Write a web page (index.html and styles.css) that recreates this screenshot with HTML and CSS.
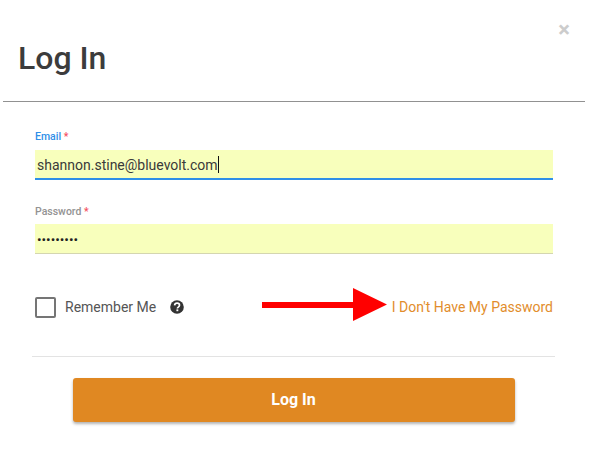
FILE: index.html
```html
<!DOCTYPE html>
<html lang="en">
<head>
<meta charset="utf-8">
<title>Log In</title>
<link rel="stylesheet" href="styles.css">
</head>
<body>
<div class="modal">
  <header class="head">
    <h1 class="title">Log In</h1>
    <span class="close">×</span>
  </header>
  <form class="form">
    <div class="field field-email">
      <label class="label label-active">Email <span class="req">*</span></label>
      <div class="input input-active">shannon.stine@bluevolt.com<span class="caret"></span></div>
    </div>
    <div class="field field-pass">
      <label class="label">Password <span class="req">*</span></label>
      <div class="input input-pass">•••••••••</div>
    </div>
    <div class="options">
      <div class="remember">
        <span class="checkbox"></span>
        <span class="remember-text">Remember Me</span>
        <svg class="help" width="14" height="14" viewBox="0 0 14 14"><circle cx="7" cy="7" r="6.8" fill="#333"/><path d="M4.6 5.4C4.7 4 5.7 3.2 7.1 3.2c1.4 0 2.4.8 2.4 2 0 1.9-2.1 1.8-2.1 3.2" fill="none" stroke="#fff" stroke-width="1.7"/><rect x="6.4" y="9.4" width="1.9" height="1.8" fill="#fff"/></svg>
      </div>
      <div class="forgot">
        <svg class="arrow" width="125" height="33" viewBox="0 0 125 33"><path d="M0 14h91V0l34 16.500-34 16.500V20H0z" fill="#f00"/></svg>
        <a class="forgot-link">I Don't Have My Password</a>
      </div>
    </div>
    <div class="footer">
      <button class="submit" type="button">Log In</button>
    </div>
  </form>
</div>
</body>
</html>
```
FILE: styles.css
```css
html, body { margin: 0; padding: 0; background: #fff; }
body { width: 592px; height: 464px; overflow: hidden; font-family: Roboto, "Liberation Sans", sans-serif; color: #333; }
.modal { padding: 0 7px 0 3px; }
.head { height: 101px; border-bottom: 1px solid #919191; display: flex; justify-content: space-between; }
.title { margin: 39px 0 0 15px; font-size: 32px; font-weight: 500; line-height: 38px; color: #3c3c3c; }
.close { margin: 17px 15px 0 0; font-size: 22px; line-height: 26px; font-weight: 700; color: #ccc; }
.form { padding: 28px 0 0 29px; display: flex; flex-direction: column; }
.field { margin: 0 32px 0 3px; }
.field-pass { margin-top: 25px; }
.label { display: block; font-size: 10.5px; font-weight: 500; line-height: 14px; color: #939393; }
.label-active { color: #2f8fe8; }
.req { color: #f4505f; }
.input { margin-top: 5px; height: 29px; background: #f8ffbc; border-bottom: 1px solid #d4d6b0; font-size: 14px; padding-left: 2px; color: #3a3a3a; display: flex; align-items: center; }
.input-active { margin-top: 6px; height: 27px; padding-top: 1px; border-bottom: 2px solid #2f8fe8; }
.input-pass { color: #222; font-size: 13.5px; }
.caret { width: 1px; height: 17px; background: #111; }
.options { display: flex; justify-content: space-between; align-items: center; margin: 36px 32px 0 3px; height: 34px; }
.remember { display: flex; align-items: center; }
.checkbox { width: 17px; height: 17px; border: 2px solid #757575; border-radius: 2px; }
.remember-text { margin-left: 9px; font-size: 14px; color: #555; }
.help { margin-left: 14px; }
.forgot { display: flex; align-items: center; }
.arrow { margin-right: 5px; margin-top: -6px; }
.forgot-link { font-size: 14px; color: #e28d2c; }
.footer { margin: 32px 30px 0 0; border-top: 1px solid #e3e3e3; padding-top: 21px; display: flex; justify-content: center; }
.submit { width: 442px; height: 44px; padding: 0 0 2px; border: 0; border-radius: 3px; background: #e08822; color: #fff; font: 700 16px Roboto, "Liberation Sans", sans-serif; box-shadow: 0 2px 3px rgba(0,0,0,.3); }
```
